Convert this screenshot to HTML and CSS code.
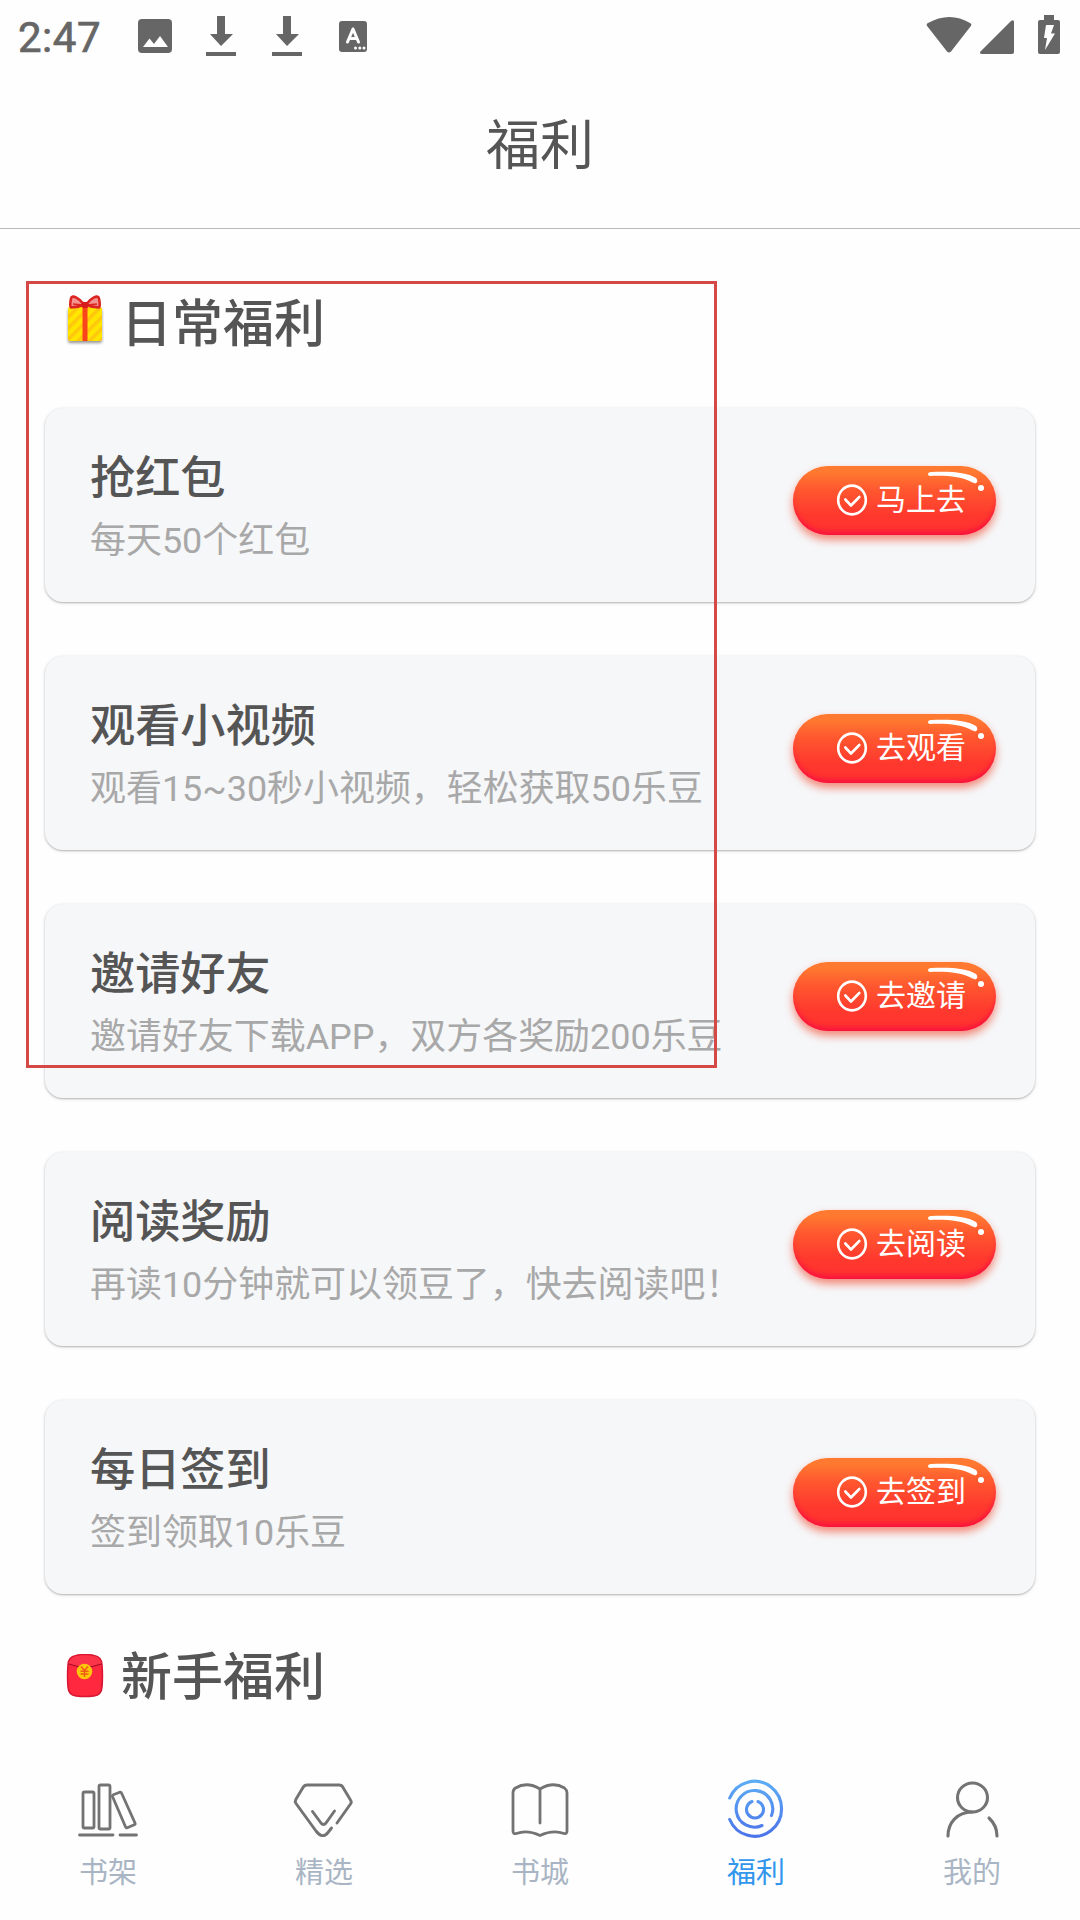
FILE: index.html
```html
<!DOCTYPE html>
<html lang="zh-CN">
<head>
<meta charset="utf-8">
<meta name="viewport" content="width=device-width">
<title>福利</title>
<link rel="stylesheet" href="styles.css">
</head>
<body>
<svg class="defs" width="0" height="0" aria-hidden="true">
  <defs>
    <symbol id="check" viewBox="0 0 32 32"><ellipse cx="16" cy="16" rx="13.8" ry="14.4" fill="none" stroke="#fff" stroke-width="2.6"/><path d="M9.3 15.5l5.7 6 8.3-8.5" fill="none" stroke="#fff" stroke-width="2.6" stroke-linecap="round" stroke-linejoin="round"/></symbol>
    <symbol id="shine" viewBox="0 0 60 22"><path d="M4 2C2 2 1 3 1 4s1 2 2 2c17-.6 32 .6 42.500 6.500 4 2.500 6.500-1.500 3.500-4.500C40 2 22 1 4 2z" fill="#fff"/><circle cx="54" cy="18" r="3" fill="#fff"/></symbol>
    <symbol id="download" viewBox="0 0 30 42"><path d="M11 0h8v18h8L15 30 4 18h7zM0 36h30v4H0z" fill="#666"/></symbol>
  </defs>
</svg>
<div class="screen">
  <header class="status">
    <span class="clock">2:47</span>
    <svg class="st-photo" width="34" height="34" viewBox="0 0 34 34"><rect width="34" height="34" rx="4" fill="#666"/><path d="M5 28l6.500-8.500 4.500 5.500 6-8L30 28z" fill="#fff"/></svg>
    <svg class="st-down" width="30" height="42"><use href="#download"/></svg>
    <svg class="st-down2" width="30" height="42"><use href="#download"/></svg>
    <svg class="st-a" width="28" height="31" viewBox="0 0 28 31"><rect width="28" height="31" rx="3" fill="#666"/><path d="M8.500 21L14 8l5.500 13M10.500 17.500h7" fill="none" stroke="#fff" stroke-width="3" stroke-linecap="round" stroke-linejoin="round"/><circle cx="16.500" cy="27" r="1.500" fill="#fff"/><circle cx="20.800" cy="27" r="1.500" fill="#fff"/><circle cx="25" cy="27" r="1.500" fill="#fff"/></svg>
    <svg class="st-right" width="136" height="40" viewBox="0 0 136 40"><g fill="#666"><path d="M1.500 11.500Q-.5 9.500 2 8C16 0 31 0 44 8q2.500 1.500.5 3.500L25 36.500q-2 2-4 0z"/><path d="M56 39q-3 0-1.500-2.500L85 6q3-2 3 1v30q0 2-2 2z"/><path d="M118 0h10v5h4q2 0 2 2v30q0 2-2 2h-18q-2 0-2-2V7q0-2 2-2h4z"/></g><path d="M120 10h8l-3 8.500h4L119 35l2-12h-3z" fill="#fff"/></svg>
  </header>
  <div class="titlebar"><h1>福利</h1></div>
  <main>
    <section>
      <h2 class="heading daily"><svg width="38" height="52" viewBox="0 0 38 52">
        <defs><pattern id="stripes" width="8" height="8" patternUnits="userSpaceOnUse" patternTransform="rotate(-45)"><rect width="8" height="8" fill="#ffe600"/><rect width="8" height="3.500" fill="#ffc80c"/></pattern><filter id="soft" x="-20%" y="-20%" width="140%" height="150%"><feDropShadow dx="0" dy="2" stdDeviation="1.800" flood-color="#666" flood-opacity=".7"/></filter></defs>
        <rect x="2" y="13" width="34" height="34" rx="2" fill="url(#stripes)" filter="url(#soft)"/><path d="M16.500 12h5v35h-5z" fill="#f9441c"/>
        <path d="M18 10.500C13 4 6 0 5 4.500c-.8 4-.8 8 0 9 4 0 9-1 13-3zM20 10.500C25 4 32 0 33 4.500c.8 4 .8 8 0 9-4 0-9-1-13-3z" fill="#f3948f" stroke="#dc2420" stroke-width="2.600" stroke-linejoin="round"/><path d="M17 11L7 10M21 11l10-1" stroke="#dc2420" stroke-width="1.600"/><rect x="15.500" y="8" width="7" height="6" rx="2" fill="#d71c1b"/></svg><span>日常福利</span></h2>
      <div class="cards">
        <article class="card"><div class="copy"><h3>抢红包</h3><p>每天50个红包</p></div><button class="go"><svg class="shine"><use href="#shine"/></svg><svg class="check"><use href="#check"/></svg>马上去</button></article>
        <article class="card"><div class="copy"><h3>观看小视频</h3><p>观看15~30秒小视频，轻松获取50乐豆</p></div><button class="go"><svg class="shine"><use href="#shine"/></svg><svg class="check"><use href="#check"/></svg>去观看</button></article>
        <article class="card"><div class="copy"><h3>邀请好友</h3><p>邀请好友下载APP，双方各奖励200乐豆</p></div><button class="go"><svg class="shine"><use href="#shine"/></svg><svg class="check"><use href="#check"/></svg>去邀请</button></article>
        <article class="card"><div class="copy"><h3>阅读奖励</h3><p>再读10分钟就可以领豆了，快去阅读吧！</p></div><button class="go"><svg class="shine"><use href="#shine"/></svg><svg class="check"><use href="#check"/></svg>去阅读</button></article>
        <article class="card"><div class="copy"><h3>每日签到</h3><p>签到领取10乐豆</p></div><button class="go"><svg class="shine"><use href="#shine"/></svg><svg class="check"><use href="#check"/></svg>去签到</button></article>
      </div>
    </section>
    <section>
      <h2 class="heading newbie"><svg width="38" height="44" viewBox="0 0 38 44"><path d="M10 1.500Q19-.5 28 1.500q8 1.500 8 9.500.8 11 0 22-.5 8-8 9-9 1-18 0-7.500-1-8-9-.8-11 0-22 0-8 8-9.500z" fill="#ff283f" stroke="#d91733" stroke-width="1.600"/><path d="M2.500 9Q6 2 11 2q8-1.500 16 0 6 0 8.500 7-16 8-33 0z" fill="#fb3449"/><path d="M2.500 10q17 6 33 0" fill="none" stroke="#a80e26" stroke-width="1.200"/><circle cx="18.500" cy="17.500" r="7.800" fill="#ffc70a"/><path d="M15 12.500l3.500 4 3.500-4M18.500 16.500V23M14.500 17.300h8M14.500 20h8" fill="none" stroke="#ef5b17" stroke-width="1.500"/></svg><span>新手福利</span></h2>
    </section>
  </main>
  <nav class="tabs">
    <a class="tab"><svg viewBox="0 0 60 60"><g fill="none" stroke="#737373" stroke-width="2.800" stroke-linecap="round" stroke-linejoin="round"><rect x="5" y="11" width="11" height="36" rx="1.500"/><rect x="21" y="4" width="11" height="44" rx="1.500"/><path d="M34.500 15.500q-.4-1.200.8-1.800l6.500-2.500q1.200-.4 1.700.8L57 42q.5 1.200-.7 1.700l-7 3q-1.200.5-1.700-.7zM1.500 54H35M42 54h16.500"/></g></svg><span>书架</span></a>
    <a class="tab"><svg viewBox="0 0 60 60"><path d="M43 42L56.500 23q1.500-2 0-4L49 6.500Q48 4 45 4H13q-2.500 0-4 2.500L1.800 18.500q-1.200 2 .2 4L22 50q6.500 8.500 12 1.500l3.500-4.500M18.500 30.500L27 42q2.500 3 5 0l8.500-12" fill="none" stroke="#737373" stroke-width="2.900" stroke-linecap="round" stroke-linejoin="round"/></svg><span>精选</span></a>
    <a class="tab"><svg viewBox="0 0 60 60"><path d="M30 42V8M30 8Q17 0 5.500 7 3 8.500 3 12V50q0 3.500 3.500 2.500Q17 48.500 30 54.500 43 48.500 54 52.500q3 .8 3-2.500V12q0-3-2.500-5Q43 0 30 8" fill="none" stroke="#737373" stroke-width="2.800" stroke-linecap="round" stroke-linejoin="round"/></svg><span>书城</span></a>
    <a class="tab active"><svg viewBox="0 1 60 60"><defs><linearGradient id="blue" gradientUnits="userSpaceOnUse" x1="0" y1="0" x2="0" y2="60"><stop offset="0" stop-color="#5dadf5"/><stop offset="1" stop-color="#4a70e9"/></linearGradient></defs><g fill="none" stroke="url(#blue)" stroke-width="3.100" stroke-linecap="round"><path d="M3.700 18A27 27.500 0 1 1 3.700 39.500M45.500 35.500A18.300 18.300 0 1 0 36 45.500M26 21.500a8.500 8.500 0 1 0 6 0"/></g></svg><span>福利</span></a>
    <a class="tab"><svg viewBox="0 1 60 60"><g fill="none" stroke="#737373" stroke-width="3.100" stroke-linecap="round"><ellipse cx="30.500" cy="17.500" rx="15" ry="14.500"/><path d="M6 56C6 43 15 32 30 32M47 38q8 7.500 8 18"/></g></svg><span>我的</span></a>
  </nav>
  <div class="frame"></div>
</div>
</body>
</html>
```
FILE: styles.css
```css
* { box-sizing: border-box; margin: 0; padding: 0; }
body { background: #fefefe; color: #555; font-family: Roboto, "Noto Sans CJK SC", sans-serif; }
.defs { position: absolute; }
.screen { position: relative; width: 1080px; height: 1920px; display: flex; flex-direction: column; overflow: hidden; }

.status { height: 76px; display: flex; align-items: flex-start; padding-left: 18px; color: #666; flex: none; }
.clock { width: 120px; font-size: 42px; line-height: 48px; font-weight: 400; -webkit-text-stroke: .7px #666; padding-top: 14px; letter-spacing: .5px; }
.status svg { flex: none; }
.st-photo { margin-top: 19px; }
.st-down { margin: 16px 0 0 34px; }
.st-down2 { margin: 16px 0 0 36px; }
.st-a { margin: 21px 0 0 37px; }
.st-right { margin: 15px 18px 0 auto; width: 136px; }

.titlebar { height: 153px; flex: none; border-bottom: 1px solid #bbb; display: flex; justify-content: center; }
.titlebar h1 { font-size: 54px; line-height: 80px; font-weight: 400; padding-top: 31px; }

main { flex: 1; padding: 54px 45px 0 45px; }
.heading { display: flex; align-items: center; gap: 17px; height: 80px; padding-left: 21px; font-size: 51px; line-height: 80px; font-weight: 500; }
.daily span { padding-top: 4px; }
.daily svg { margin-top: -6px; }
.cards { display: flex; flex-direction: column; gap: 54px; padding-top: 45px; }
.card { height: 194px; display: flex; justify-content: space-between; padding: 0 39.500px 0 45px; border-radius: 18px; background: #f6f7f9; box-shadow: 0 1px 2px rgba(0,0,0,.24), 0 1px 4px rgba(0,0,0,.09); }
.copy { padding-top: 39px; white-space: nowrap; }
.copy h3 { font-size: 45.200px; line-height: 64px; font-weight: 500; }
.copy p { font-size: 35.950px; line-height: 60px; font-weight: 400; color: #a8a8a8; }
.go { position: relative; width: 203px; height: 69px; margin-top: 58px; border: 0; border-radius: 35px; display: flex; align-items: center; gap: 8.500px; padding: 0 0 2px 43px; font: 400 30px/44px Roboto, "Noto Sans CJK SC", sans-serif; color: #fff; white-space: nowrap; background: linear-gradient(#ff7a30 8%, #ff572f 35%, #ff392e 70%, #ff3030); box-shadow: inset 0 -5px 5px -2px #f8103f, 0 5px 8px rgba(240,65,35,.6); }
.check { width: 32px; height: 32px; flex: none; }
.shine { position: absolute; left: 134px; top: 4px; width: 60px; height: 22px; }
.newbie { margin-top: 42px; }
.newbie span { padding-top: 3px; }

.tabs { height: 150px; flex: none; display: grid; grid-template-columns: repeat(5, 1fr); padding-top: 11px; background: #fefefe; }
.tab { display: flex; flex-direction: column; align-items: center; color: #a9b5c4; font-size: 29px; line-height: 44px; font-weight: 400; }
.tab svg { width: 60px; height: 60px; overflow: visible; }
.tab span { padding-top: 10px; }
.tab.active { color: #3296ed; }

.frame { position: absolute; left: 26px; top: 281px; width: 691px; height: 787px; border: 3px solid #d44846; pointer-events: none; }
```
